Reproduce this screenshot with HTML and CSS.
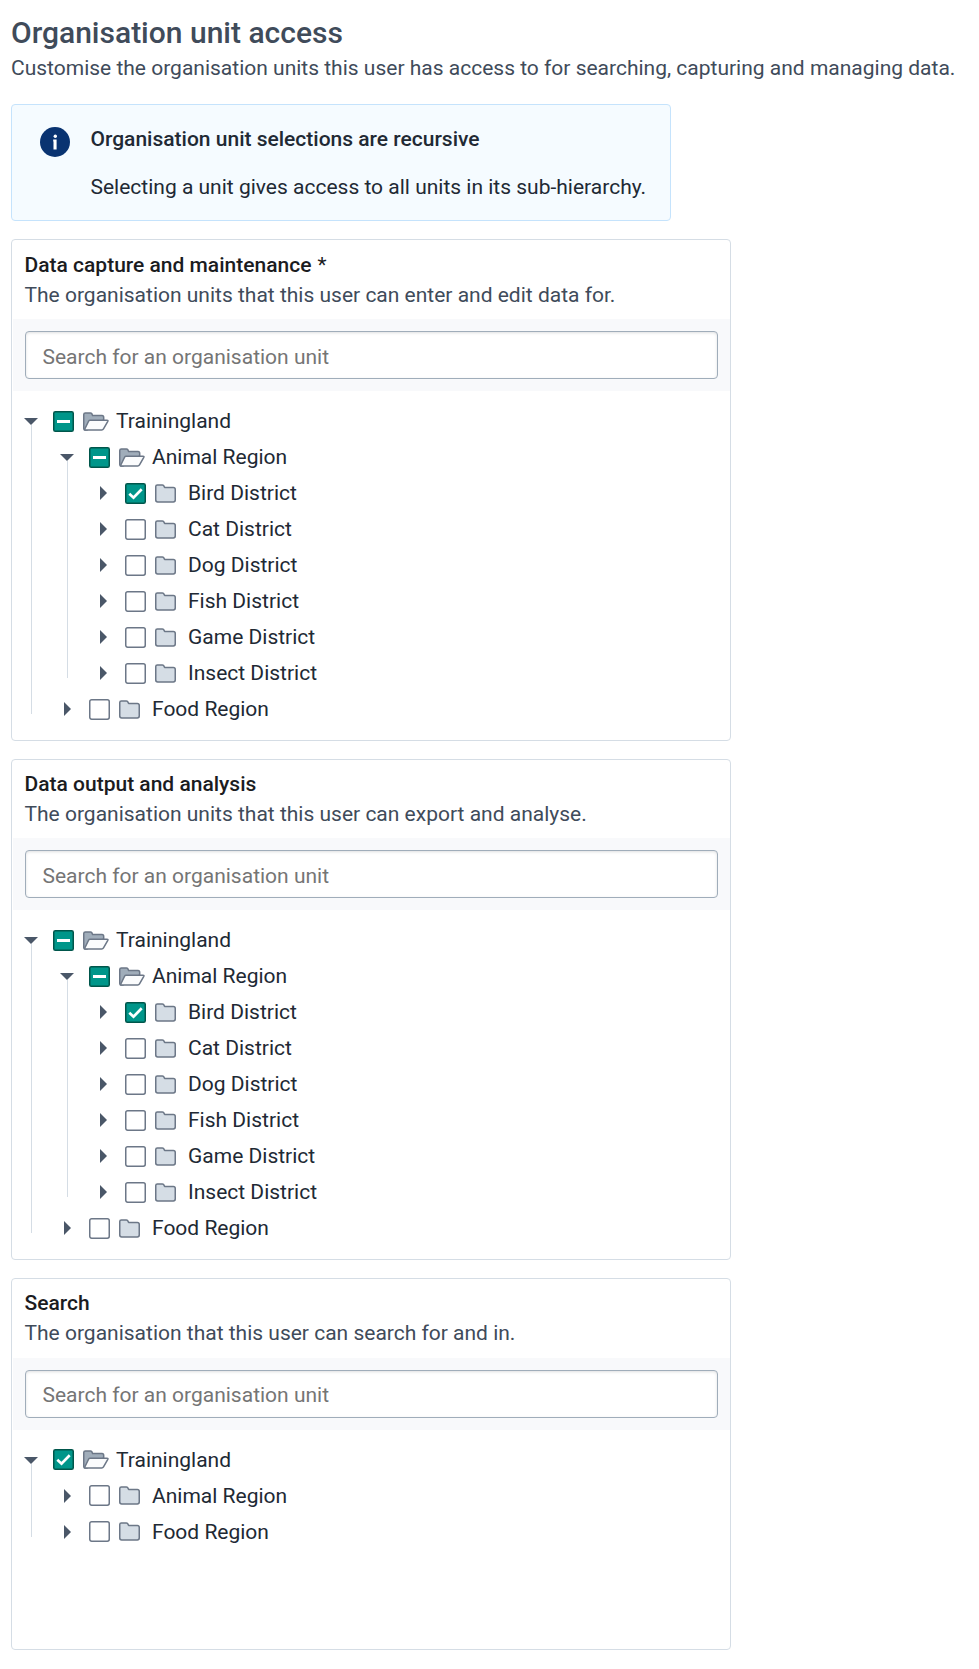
FILE: index.html
```html
<!DOCTYPE html>
<html lang="en">
<head>
<meta charset="utf-8">
<title>Organisation unit access</title>
<link rel="stylesheet" href="styles.css">
</head>
<body>
<svg class="sprite" width="0" height="0" aria-hidden="true">
  <symbol id="down" viewBox="0 0 14 7"><path d="M0 0h14L7 7z" fill="#4a5768"/></symbol>
  <symbol id="right" viewBox="0 0 7 14"><path d="M0 0v14l7-7z" fill="#4a5768"/></symbol>
  <symbol id="closed" viewBox="0 0 21 19"><path d="M.75 16V2.6Q.75.9 2.4.9H7.2Q8.2.9 8.7 1.7L9.4 3Q9.8 3.6 10.6 3.6H18.3Q20.25 3.6 20.25 5.5V16Q20.25 17.9 18.3 17.9H2.7Q.75 17.9.75 16z" fill="#d5dde5" stroke="#6c7787" stroke-width="1.5"/></symbol>
  <symbol id="open" viewBox="0 0 26 19"><path d="M.75 16.5V2.6Q.75.9 2.4.9H7.5Q8.3.9 8.8 1.7L9.6 3.6H19Q20.7 3.6 20.7 5.4V8L4 18H2Q.75 18 .75 16.5z" fill="#a0adba" stroke="#6c7787" stroke-width="1.5"/><path d="M7.1 8.2H24Q25.4 8.2 24.8 9.4L20.5 16.9Q19.9 18 18.7 18H2.4Q1.3 18 1.8 17L5.7 9Q6.1 8.2 7.1 8.2z" fill="#fbfcfd" stroke="#6c7787" stroke-width="1.5"/></symbol>
  <symbol id="empty" viewBox="0 0 21 21"><rect x=".75" y=".75" width="19.5" height="19.5" rx="1.9" fill="#fff" stroke="#6c7787" stroke-width="1.5"/></symbol>
  <symbol id="tick" viewBox="0 0 21 21"><rect x=".75" y=".75" width="19.5" height="19.5" rx="1.6" fill="#00968a" stroke="#00564b" stroke-width="1.5"/><path d="M4.3 10.8L8.5 14.7L16.7 6.2" fill="none" stroke="#fff" stroke-width="2.7"/></symbol>
  <symbol id="dash" viewBox="0 0 21 21"><rect x=".75" y=".75" width="19.5" height="19.5" rx="1.6" fill="#00968a" stroke="#00564b" stroke-width="1.5"/><path d="M4 9h13v3H4z" fill="#fff"/></symbol>
</svg>
<main class="page">
  <h1 class="title">Organisation unit access</h1>
  <p class="subtitle">Customise the organisation units this user has access to for searching, capturing and managing data.</p>
  <aside class="notice">
    <svg class="info" viewBox="0 0 30 30"><circle cx="15" cy="15" r="15" fill="#093371"/><circle cx="15.3" cy="9.2" r="1.7" fill="#fff"/><path d="M13.2 12.6h3.4V22.6h-3.1v-8.2h-.3z" fill="#fff"/></svg>
    <div>
      <h2 class="notice-title">Organisation unit selections are recursive</h2>
      <p class="notice-text">Selecting a unit gives access to all units in its sub-hierarchy.</p>
    </div>
  </aside>
  <div class="cards" id="cards"></div>
</main>
<script src="tree.js"></script>
</body>
</html>
```

FILE: styles.css
```css
* { box-sizing: border-box; }
body { margin: 0; background: #fff; font: 21px/30px Roboto, sans-serif; color: #212934; }
h1, h2, p, ul { margin: 0; padding: 0; }
.sprite { display: block; width: 0; height: 0; }
.page { padding: 15px 0 0 11px; }
.title { font-size: 30px; line-height: 36px; font-weight: 500; color: #404b5a; }
.subtitle { margin-top: 2px; color: #404b5a; white-space: nowrap; }
.notice { display: flex; width: 660px; height: 117px; margin-top: 21px; padding: 19px 0 0 28px; background: #f5fbff; border: 1px solid #c5e3fc; border-radius: 4px; }
.info { width: 30px; height: 30px; margin: 3px 20.5px 0 0; }
.notice-title { font-size: 21px; line-height: 30px; font-weight: 500; }
.notice-text { margin-top: 18px; }
.cards { margin-top: 18px; display: flex; flex-direction: column; gap: 18px; }
.card { width: 720px; border: 1px solid #d5dde5; border-radius: 4px; }
.capture { height: 502px; }
.output { height: 501px; }
.find { height: 372px; }
.head { height: 79px; padding: 9px 12px 0 12.5px; }
.capture .head { padding-top: 10px; }
.output .head { height: 78px; }
.name { font-size: 21px; line-height: 30px; font-weight: 500; color: #1b1c1f; }
.required { font-weight: 400; padding-left: 1px; }
.desc { color: #404b5a; }
.search { margin-left: 1px; padding: 12px; height: 72px; background: #f8f9fb; }
.input { display: block; width: 100%; height: 48px; padding: 3px 17px 0 16.5px; font: 21px Roboto, sans-serif; background: #fff; border: 1px solid #a0adba; border-radius: 4px; box-shadow: inset 0 1px 3px rgba(48, 54, 60, .16); }
.find .input { padding-top: 1px; }
.input::placeholder { color: #757575; opacity: 1; }
.tree { padding: 12px 0 0 12px; }
.branch { list-style: none; }
.kids { position: relative; padding-left: 36px; }
.kids::before { content: ""; position: absolute; left: 7px; top: -14px; bottom: 13px; width: 1px; background: #d5dde5; }
.row { display: flex; align-items: center; height: 36px; }
.toggle { display: flex; justify-content: center; width: 14px; margin-right: 15px; }
.down { width: 14px; height: 7px; }
.right { width: 7px; height: 14px; margin-left: 1px; }
.box { width: 21px; height: 21px; margin-top: 1px; }
.folder { height: 19px; margin-left: 9px; margin-top: 1px; }
.find .box, .find .folder { margin-top: 0; margin-bottom: 1px; }
.closed { width: 21px; margin-right: 12px; }
.open { width: 26px; margin-right: 7px; }
.label { white-space: nowrap; }
```

FILE: tree.js
```js
const districts = ['Bird', 'Cat', 'Dog', 'Fish', 'Game', 'Insect']
  .map((n, i) => ({ name: n + ' District', mark: i ? 'empty' : 'tick' }));
const full = { name: 'Trainingland', mark: 'dash', kids: [
  { name: 'Animal Region', mark: 'dash', kids: districts },
  { name: 'Food Region', mark: 'empty' }
] };
const brief = { name: 'Trainingland', mark: 'tick', kids: [
  { name: 'Animal Region', mark: 'empty' },
  { name: 'Food Region', mark: 'empty' }
] };
const cards = [
  ['capture', 'Data capture and maintenance <span class="required">*</span>', 'The organisation units that this user can enter and edit data for.', full],
  ['output', 'Data output and analysis', 'The organisation units that this user can export and analyse.', full],
  ['find', 'Search', 'The organisation that this user can search for and in.', brief]
];
const icon = (id, cls) => `<svg class="${cls}"><use href="#${id}"/></svg>`;
const branch = n => `<li class="branch"><div class="row">
  <span class="toggle">${n.kids ? icon('down', 'down') : icon('right', 'right')}</span>
  ${icon(n.mark, 'box')}
  ${n.kids ? icon('open', 'folder open') : icon('closed', 'folder closed')}
  <span class="label">${n.name}</span></div>
  ${n.kids ? `<ul class="kids">${n.kids.map(branch).join('')}</ul>` : ''}</li>`;
document.getElementById('cards').innerHTML = cards.map(([kind, name, desc, tree]) =>
  `<section class="card ${kind}">
    <div class="head"><h2 class="name">${name}</h2><p class="desc">${desc}</p></div>
    <div class="search"><input class="input" placeholder="Search for an organisation unit"></div>
    <ul class="tree">${branch(tree)}</ul>
  </section>`).join('');
```
